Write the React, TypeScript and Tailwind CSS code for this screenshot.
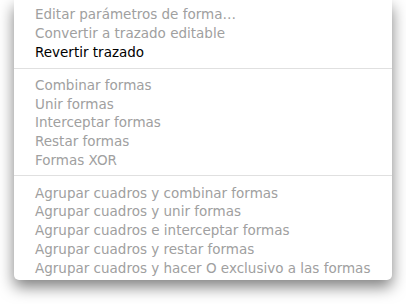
const groups: { label: string; enabled?: boolean }[][] = [
  [
    { label: "Editar parámetros de forma…" },
    { label: "Convertir a trazado editable" },
    { label: "Revertir trazado", enabled: true },
  ],
  [
    { label: "Combinar formas" },
    { label: "Unir formas" },
    { label: "Interceptar formas" },
    { label: "Restar formas" },
    { label: "Formas XOR" },
  ],
  [
    { label: "Agrupar cuadros y combinar formas" },
    { label: "Agrupar cuadros y unir formas" },
    { label: "Agrupar cuadros e interceptar formas" },
    { label: "Agrupar cuadros y restar formas" },
    { label: "Agrupar cuadros y hacer O exclusivo a las formas" },
  ],
];

// separator spacing differs a little between the two dividers
const sepClass = ["", "mt-[6.5px] mb-[7px]", "mt-[5px] mb-[8px]"];

export default function App() {
  return (
    <div className="w-[406px] h-[304px] bg-white overflow-hidden">
      <div
        className="ml-[14px] w-[378px] h-[280px] bg-white rounded-b-[5px] shadow-[0_7px_15px_rgba(0,0,0,0.5)] pt-[5px] text-[13.5px] leading-[18.75px]"
        style={{ fontFamily: '"DejaVu Sans", "Lucida Grande", sans-serif' }}
      >
        {groups.map((group, gi) => (
          <div key={gi}>
            {gi > 0 && <div className={`h-px bg-[#e0e0e0] ${sepClass[gi]}`} />}
            {group.map((item) => (
              <div
                key={item.label}
                className={`px-[21px] h-[18.75px] whitespace-nowrap ${item.enabled ? "text-black" : "text-[#a0a0a0]"}`}
              >
                {item.label}
              </div>
            ))}
          </div>
        ))}
      </div>
    </div>
  );
}
